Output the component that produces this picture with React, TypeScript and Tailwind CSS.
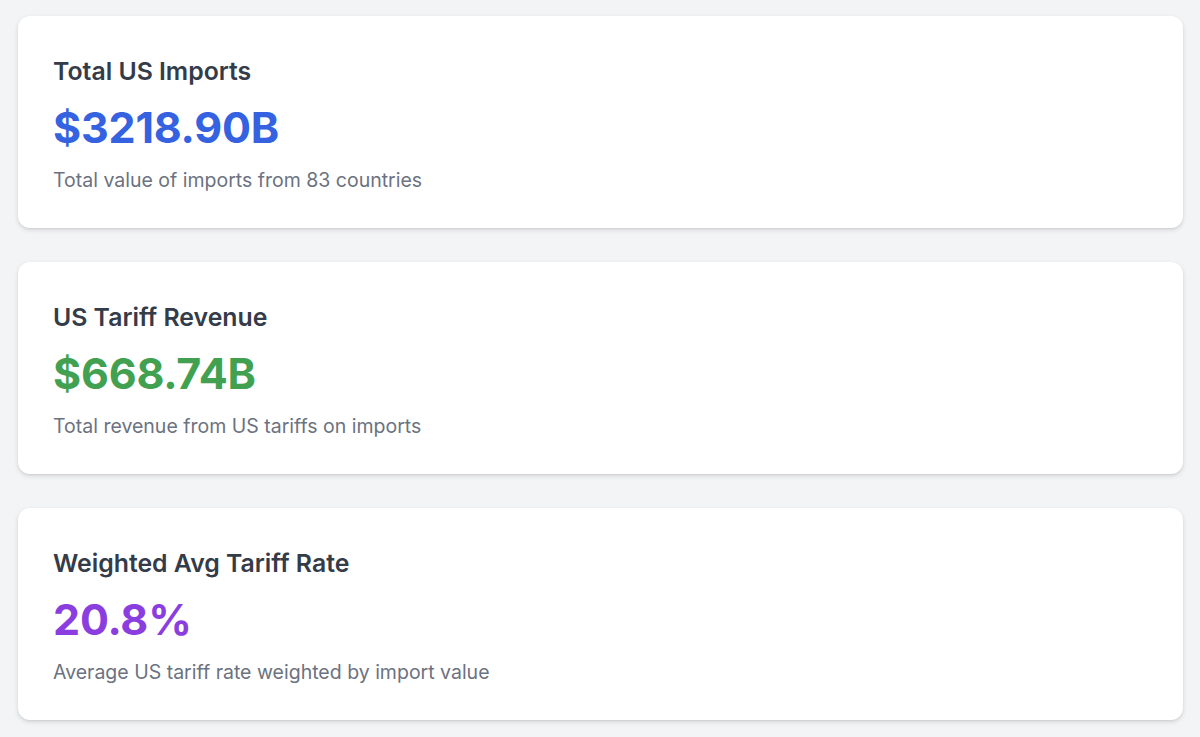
const stats = [
  {
    title: 'Total US Imports',
    value: '$3218.90B',
    color: 'text-[#3562e0]',
    desc: 'Total value of imports from 83 countries',
  },
  {
    title: 'US Tariff Revenue',
    value: '$668.74B',
    color: 'text-[#42a150]',
    desc: 'Total revenue from US tariffs on imports',
  },
  {
    title: 'Weighted Avg Tariff Rate',
    value: '20.8%',
    color: 'text-[#8a3ee0]',
    desc: 'Average US tariff rate weighted by import value',
  },
]

function StatCard({ title, value, color, desc }: (typeof stats)[number]) {
  return (
    <section className="h-[212px] rounded-xl bg-white px-[35px] pt-[39px] shadow-[0_2px_5px_rgba(0,0,0,0.12),0_1px_2px_rgba(0,0,0,0.06)]">
      <h2 className="text-[24.8px] font-semibold leading-[32px] text-[#343b49]">{title}</h2>
      <p className={`mt-[14px] text-[43px] font-bold leading-[52px] tracking-[-0.2px] ${color}`}>{value}</p>
      <p className="mt-[13px] text-[19.5px] leading-[28px] text-[#6b7280]">{desc}</p>
    </section>
  )
}

export default function App() {
  return (
    <div
      className="min-h-[737px] bg-[#f3f4f6] pl-[18px] pr-[17px] pt-4"
      style={{ fontFamily: 'Inter, "Noto Sans", sans-serif' }}
    >
      <div className="flex flex-col gap-[34px]">
        {stats.map((s) => (
          <StatCard key={s.title} {...s} />
        ))}
      </div>
    </div>
  )
}
